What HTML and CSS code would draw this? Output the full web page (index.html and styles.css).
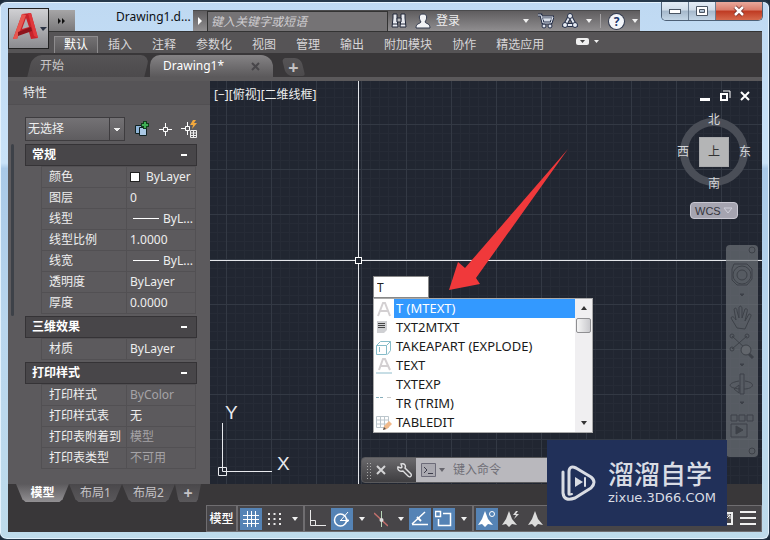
FILE: index.html
```html
<!DOCTYPE html>
<html lang="zh-CN">
<head>
    <meta charset="UTF-8">
    <meta name="viewport" content="width=device-width, initial-scale=1.0">
    <title>Drawing1.dwg</title>
    <link rel="stylesheet" href="styles.css">
</head>
<body>

<div class="window">

    <div class="window-buttons">
        <button class="win-btn" aria-label="最小化"><svg width="14" height="12"><rect x="1.500" y="4.500" width="11" height="4" fill="#fff" stroke="#4a5563"/></svg></button>
        <button class="win-btn" aria-label="最大化"><svg width="12" height="12"><path d="M.5 1.500h11v9H.5z M3.500 4.500h5v3h-5z" fill="#fff" fill-rule="evenodd" stroke="#4a5563"/></svg></button>
        <button class="win-btn win-close" aria-label="关闭"><svg width="14" height="12"><path d="M3 2l8 8M11 2l-8 8" stroke="#6d2a24" stroke-width="4"/><path d="M3 2l8 8M11 2l-8 8" stroke="#fff" stroke-width="2.500"/></svg></button>
    </div>

    <header class="header">
        <button class="app-logo" aria-label="应用程序菜单">
            <svg width="38" height="38" viewBox="0 0 38 38">
                <path d="M4 29L13 4l9-1 7 25-7 1-2-7-10 1-2 6z" fill="#c8232b"/>
                <path d="M13 4l4 1-9 24-4 0z" fill="#e8564f"/>
                <path d="M17 8l-4 11 7-2z" fill="#aeb0b4"/>
                <path d="M9 22l13-5 1 4-14 5z" fill="#8e141c"/>
                <path d="M19 3l3 0 7 25-4-2z" fill="#e0393d"/>
                <path d="M31 17h7l-4 4z" fill="#2c3445"/>
            </svg>
        </button>
        <div class="header-main">
            <div class="title-row">
                <button class="quick-more" aria-label="更多"><svg width="8" height="6"><path d="M0 0l3 3-3 3zM4 0l3 3-3 3z" fill="#111"/></svg></button>
                <span class="doc-title">Drawing1.d...</span>
                <div class="info-center">
                    <button class="info-arrow" aria-label="展开"><svg width="6" height="10"><path d="M1 1l4 4-4 4z" fill="#fff"/></svg></button>
                    <input class="info-search" type="text" placeholder="键入关键字或短语" aria-label="搜索">
                    <button class="icon-btn" aria-label="查找"><svg width="16" height="16"><path d="M2 1h4v4l1 9H1L2 5zM10 1h4v4l1 9H9l1-9z" fill="#e8eaf0" stroke="#22283a"/><path d="M6 5h4v4H6zM1 11h6M9 11h6" fill="#bbb" stroke="#22283a"/></svg></button>
                    <button class="login"><svg width="16" height="16"><path d="M8 1c5 0 4 5 2 8 1 2 5 1 5 6H1c0-5 4-4 5-6C4 6 3 1 8 1z" fill="#f2f3f6" stroke="#30384c"/></svg>登录</button>
                    <span class="spacer"></span>
                    <i class="caret"></i>
                    <button class="icon-btn" aria-label="购物车"><svg width="17" height="16"><path d="M1 2h3l2 8h8l2-6H5" fill="#d5dbe6" stroke="#26304a" stroke-width="3"/><path d="M1 2h3l2 8h8l2-6H5M6 6h9" fill="none" stroke="#e6ebf3"/><circle cx="7" cy="13" r="2" fill="#dfe4ee" stroke="#26304a"/><circle cx="13" cy="13" r="2" fill="#dfe4ee" stroke="#26304a"/></svg></button>
                    <button class="icon-btn" aria-label="A360"><svg width="16" height="16"><path d="M8 3l5 9H3z" fill="none" stroke="#26304a" stroke-width="4"/><path d="M8 3l5 9H3z" fill="none" stroke="#e6ebf3" stroke-width="2"/><circle cx="8" cy="3" r="2.500" fill="#e6ebf3" stroke="#26304a"/><circle cx="3" cy="12" r="2.500" fill="#e6ebf3" stroke="#26304a"/><circle cx="13" cy="12" r="2.500" fill="#e6ebf3" stroke="#26304a"/></svg></button>
                    <i class="caret"></i>
                    <i class="info-sep"></i>
                    <button class="help" aria-label="帮助">?</button>
                    <i class="caret"></i>
                </div>
            </div>
            <nav class="ribbon">
                <a class="ribbon-tab active" href="#">默认</a>
                <a class="ribbon-tab" href="#">插入</a>
                <a class="ribbon-tab" href="#">注释</a>
                <a class="ribbon-tab" href="#">参数化</a>
                <a class="ribbon-tab" href="#">视图</a>
                <a class="ribbon-tab" href="#">管理</a>
                <a class="ribbon-tab" href="#">输出</a>
                <a class="ribbon-tab" href="#">附加模块</a>
                <a class="ribbon-tab" href="#">协作</a>
                <a class="ribbon-tab" href="#">精选应用</a>
                <button class="ribbon-toggle" aria-label="最小化功能区"><svg width="24" height="8"><rect width="13" height="7" rx="2" fill="#f0f0f0"/><path d="M4 2h5L6.500 5z" fill="#444"/><path d="M18 2h5l-2.500 3z" fill="#f0f0f0"/></svg></button>
            </nav>
        </div>
    </header>

    <div class="file-tabs">
        <a class="file-tab" href="#"><span>开始</span></a>
        <a class="file-tab active" href="#"><span>Drawing1*</span><svg width="9" height="9"><path d="M1 1l7 7M8 1l-7 7" stroke="#48464a" stroke-width="2"/></svg></a>
        <button class="new-tab" aria-label="新图形"><span>+</span></button>
    </div>

    <main class="main">
        <aside class="panel">
            <div class="panel-title">特性</div>
            <div class="panel-body">
                <div class="panel-scroll"></div>
                <div class="panel-content">
                    <div class="select-row">
                        <select class="object-select" aria-label="选择对象">
                            <option>无选择</option>
                        </select>
                        <button class="icon-btn" aria-label="切换 PICKADD"><svg width="16" height="16"><path d="M1.500 4.500h8v8h-8z" fill="#8fb4d8" stroke="#122"/><path d="M5.500 6.500h7v8h-7z" fill="#a9c7e4" stroke="#122"/><path d="M11 0v8M7 4h8" stroke="#123d1c" stroke-width="4"/><path d="M11 1v6M8 4h6" stroke="#3fae55" stroke-width="2"/></svg></button>
                        <button class="icon-btn" aria-label="选择对象"><svg width="13" height="13"><path d="M6.500 0v4M6.500 9v4M0 6.500h4M9 6.500h4M4.500 4.500h4v4h-4z" fill="none" stroke="#fff"/></svg></button>
                        <button class="icon-btn" aria-label="快速选择"><svg width="16" height="18"><path d="M6.500 2v4M6.500 11v4M0 8.500h4M4.500 6.500h4v4h-4z" fill="none" stroke="#fff"/><path d="M12 0l-3 5h3l-1 4 5-6h-3l2-3z" fill="#f3a83c"/><path d="M9.500 10.500h6v7h-6zM9 13h7M9 15.500h7M12.500 10v8" fill="none" stroke="#eee"/></svg></button>
                    </div>

                    <section class="group">
                        <button class="group-head">常规<i></i></button>
                        <table class="props">
                            <tr><th>颜色</th><td><i class="swatch"></i>ByLayer</td></tr>
                            <tr><th>图层</th><td>0</td></tr>
                            <tr><th>线型</th><td><i class="line-sample"></i>ByL...</td></tr>
                            <tr><th>线型比例</th><td>1.0000</td></tr>
                            <tr><th>线宽</th><td><i class="line-sample"></i>ByL...</td></tr>
                            <tr><th>透明度</th><td>ByLayer</td></tr>
                            <tr><th>厚度</th><td>0.0000</td></tr>
                        </table>
                    </section>
                    <section class="group">
                        <button class="group-head">三维效果<i></i></button>
                        <table class="props">
                            <tr><th>材质</th><td>ByLayer</td></tr>
                        </table>
                    </section>
                    <section class="group">
                        <button class="group-head">打印样式<i></i></button>
                        <table class="props">
                            <tr><th>打印样式</th><td class="muted">ByColor</td></tr>
                            <tr><th>打印样式表</th><td>无</td></tr>
                            <tr><th>打印表附着到</th><td class="muted">模型</td></tr>
                            <tr><th>打印表类型</th><td class="muted">不可用</td></tr>
                        </table>
                    </section>
                </div>
            </div>
        </aside>

        <div class="canvas">
            <div class="view-label">[−][俯视][二维线框]</div>

            <div class="view-buttons">
                <button aria-label="最小化"><svg width="11" height="11"><path d="M0 8h10v3H0z" fill="#fff"/></svg></button>
                <button aria-label="还原"><svg width="11" height="11"><path d="M1 4h6v6H1z" fill="none" stroke="#fff" stroke-width="2"/><path d="M3 1h7v7" fill="none" stroke="#fff"/></svg></button>
                <button aria-label="关闭"><svg width="10" height="11"><path d="M1 2l8 8M9 2l-8 8" stroke="#fff" stroke-width="2"/></svg></button>
            </div>

            <!-- 十字光标 -->
            <div class="cross-v"></div>
            <div class="cross-h"></div>
            <div class="pickbox"></div>

            <!-- UCS 图标 -->
            <svg class="ucs" width="84" height="86">
                <path d="M10.500 30v48.500H60M6.500 74.500h8v8h-8z" fill="none" stroke="#e8eaee"/>
                <text x="13" y="26">Y</text>
                <text x="65" y="77">X</text>
            </svg>

            <!-- ViewCube -->
            <div class="viewcube">
                <span class="north">北</span>
                <span class="west">西</span>
                <span class="cube">上</span>
                <span class="east">东</span>
                <span class="south">南</span>
            </div>
            <button class="wcs">WCS<svg width="10" height="7"><path d="M1 1h8L5 6z" fill="none" stroke="#cfcfda"/></svg></button>

            <!-- 导航栏 -->
            <div class="navbar">
                <svg width="32" height="212" fill="none" stroke="#3d4148">
                    <circle cx="26" cy="5" r="3"/>
                    <path d="M8 19h13l5 5v10l-5 6H11l-5-5V24z"/><circle cx="16" cy="30" r="9"/><circle cx="16" cy="30" r="5"/>
                    <path d="M14 49h4l-2 2zM14 119h4l-2 2zM14 157h4l-2 2z" fill="#3d4148"/>
                    <path d="M11 83L5 73c1-3 4 0 5 2l-2-11c2-2 3 0 3 2l2 7 0-11c2-2 3 0 3 2v9l3-9c2-1 3 1 2 3l-2 9 4-7c3 0 2 2 1 4l-5 11z"/>
                    <path d="M6 91l14 13M21 91L6 104"/><circle cx="6" cy="91" r="2"/><circle cx="21" cy="91" r="2"/><circle cx="6" cy="104" r="2"/><circle cx="20" cy="105" r="5" fill="#62666c"/><path d="M23 109l4 4" stroke-width="3"/>
                    <path d="M14 129h4v20h-4zM13 136c-12 2-12 7 1 8M19 136c12 2 8 8-1 8M8 144l5-4v8z"/>
                    <path d="M5 170h6v6H5zM13 170h6v6h-6zM21 170h6v6h-6zM5 179h16v13H5z"/><path d="M10 181l7 4-7 4z" fill="#3d4148"/>
                    <circle cx="26" cy="206" r="3"/>
                </svg>
            </div>

            <svg class="arrow" width="124" height="146">
                <path d="M122 1L30 130l4 6-31 6L12 114l7 6z" fill="#f0393b"/>
            </svg>

            <input class="dyn-input" type="text" value="T" aria-label="命令">
            <div class="suggest">
                <ul class="suggest-list">
                    <li class="selected"><svg width="16" height="16"><path d="M2 15L7 2h2l5 13M4 10h8" fill="none" stroke="#d3d0d2" stroke-width="2"/></svg><span>T (MTEXT)</span></li>
                    <li><svg width="16" height="16"><path d="M1 1h10v9l-3 3H1z" fill="#cfd0d3"/><path d="M2 3.500h7M2 5.500h7M2 7.500h7" stroke="#444"/></svg><span>TXT2MTXT</span></li>
                    <li><svg width="16" height="16"><path d="M.5 6.500h10v9H.5zM.5 6.500l4-4h10l-4 4M14.500 2.500v9l-3 4M3.500 8v5" fill="none" stroke="#86bcc9"/></svg><span>TAKEAPART (EXPLODE)</span></li>
                    <li><svg width="16" height="16"><path d="M3 12L7 1h2l5 11M4 8h8" fill="none" stroke="#d3d0d2" stroke-width="2"/><path d="M0 15h16" stroke="#8fbccb"/></svg><span>TEXT</span></li>
                    <li><svg width="16" height="16"></svg><span>TXTEXP</span></li>
                    <li><svg width="16" height="16"><path d="M0 1.500h8" stroke="#86aebb" stroke-dasharray="3 1"/><path d="M11 1.500h4" stroke="#ccc"/></svg><span>TR (TRIM)</span></li>
                    <li><svg width="16" height="16"><path d="M.5 1.500h12v11H.5zM0 5h12M0 9h12M4.500 1v11M8.500 1v11" fill="none" stroke="#bcc6cc"/><path d="M7 15l1-4 5-5 3 3-5 5z" fill="#f0b98a"/><path d="M7 15l1-3 2 2z" fill="#555"/></svg><span>TABLEDIT</span></li>
                </ul>
                <div class="suggest-scroll">
                    <i class="up"></i>
                    <i class="thumb"></i>
                    <i class="down"></i>
                </div>
            </div>

            <div class="cmdline">
                <i class="grip"></i>
                <button aria-label="关闭"><svg width="10" height="10"><path d="M1 1l8 8M9 1L1 9" stroke="#d4d4d6" stroke-width="2"/></svg></button>
                <button aria-label="自定义"><svg width="15" height="15"><path d="M1 4l3 1 1-1-1-3c4-1 5 2 4 4l6 6c1 2-1 4-3 2L6 8C3 9 0 7 1 4z" fill="none" stroke="#e0e0e2" stroke-width="1.400"/></svg></button>
                <label class="cmd-field">
                    <svg width="24" height="14"><path d="M.5.5h14v13H.5z" fill="#aaa9b0" stroke="#6c6b78"/><path d="M3 4l3 3-3 3M7 10.500h5" fill="none" stroke="#3c3c4a"/><path d="M18 5h6l-3 4z" fill="#66656c"/></svg>
                    <input type="text" placeholder="键入命令">
                </label>
            </div>
        </div>
    </main>

    <div class="layout-tabs">
        <a class="layout-tab active" href="#"><span>模型</span></a>
        <a class="layout-tab" href="#"><span>布局1</span></a>
        <a class="layout-tab" href="#"><span>布局2</span></a>
        <button class="layout-tab add" aria-label="新建布局"><span>+</span></button>
    </div>

    <footer class="statusbar">
        <div class="status-group">
            <button class="status-btn text">模型</button>
        </div>
        <div class="status-group">
            <button class="status-btn on" aria-label="栅格"><svg width="16" height="16"><path d="M4.500 0v16M8.500 0v16M12.500 0v16M0 4.500h16M0 8.500h16M0 12.500h16" stroke="#fff"/></svg></button>
            <button class="status-btn" aria-label="捕捉"><svg width="14" height="14"><path d="M0 2h14M0 7h14M0 12h14" stroke="#e8e8e8" stroke-width="2" stroke-dasharray="2 3.500"/></svg></button>
            <button class="status-caret" aria-label="捕捉设置"><i class="caret"></i></button>
        </div>
        <div class="status-group">
            <button class="status-btn" aria-label="正交"><svg width="18" height="17"><path d="M1.500 0v15.500H17M1.500 10.500h5v5" fill="none" stroke="#e8e8e8"/></svg></button>
            <button class="status-btn on" aria-label="极轴追踪"><svg width="18" height="16"><circle cx="7.500" cy="9" r="6" fill="none" stroke="#fff" stroke-width="1.500"/><path d="M7 9.500h9M8 9l7-8M13 7l3 2.500-3 2" fill="none" stroke="#fff"/></svg></button>
            <button class="status-caret" aria-label="极轴设置"><i class="caret"></i></button>
            <button class="status-btn" aria-label="等轴测草图"><svg width="14" height="16"><path d="M0 2l14 13" stroke="#c2706c" stroke-width="1.500"/><path d="M7.500 0v16" stroke="#b9d6b9"/><circle cx="7.500" cy="9" r="2" fill="#ddd"/></svg></button>
            <button class="status-caret" aria-label="等轴测设置"><i class="caret"></i></button>
            <button class="status-btn on" aria-label="对象捕捉追踪"><svg width="18" height="16"><path d="M1 13.500h16M1 13L14 1" fill="none" stroke="#fff" stroke-width="1.500"/><path d="M6 6l4 4" stroke="#fff" stroke-width="2"/></svg></button>
            <button class="status-btn on" aria-label="对象捕捉"><svg width="18" height="17"><path d="M8 3.500h7.500v12h-12V9M.5 1.500h5v5h-5z" fill="none" stroke="#fff" stroke-width="1.500"/></svg></button>
            <button class="status-caret" aria-label="捕捉模式"><i class="caret"></i></button>
        </div>
        <div class="status-group wide">
            <button class="status-btn on" aria-label="注释可见性"><svg width="18" height="16"><path d="M7 0l3 8 5 6-5-1-3 3-3-3-4 1 4-6z" fill="#fff"/><circle cx="14" cy="3" r="2.500" fill="none" stroke="#fff"/></svg></button>
            <button class="status-btn" aria-label="自动缩放"><svg width="18" height="16"><path d="M7 0l3 8 5 6-5-1-3 3-3-3-4 1 4-6z" fill="#ddd"/><path d="M14 0l-3 4h3l-2 4 5-5h-3l2-3z" fill="#ddd"/></svg></button>
            <button class="status-btn" aria-label="注释比例"><svg width="15" height="16"><path d="M7 0l3 8 5 6-5-1-3 3-3-3-4 1 4-6z" fill="#ddd"/></svg></button>
            <span class="spacer"></span>
            <button class="status-btn small" aria-label="全屏显示"><svg width="13" height="13"><path d="M1 1h11v11H1z" fill="none" stroke="#eee" stroke-width="2"/><path d="M5 8l5-5M6 3h4v4" fill="none" stroke="#eee"/></svg></button>
            <button class="status-btn" aria-label="自定义"><svg width="16" height="15"><path d="M0 1h16M0 7h16M0 13h16" stroke="#f0f0f0" stroke-width="2"/></svg></button>
        </div>
    </footer>

    <div class="watermark">
        <svg width="36" height="38" viewBox="0 0 36 38" fill="none" stroke="#d9dce4" stroke-width="3" stroke-linejoin="round" stroke-linecap="round">
            <path d="M8 30V8q0-7 7-4l15 9q6 5 0 11L14 34q-11 4-12-5V8"/>
            <path d="M14 13l8 5-8 5z" fill="#d9dce4" stroke="none"/>
            <path d="M8 30q0 1 3 0" stroke-width="2"/>
            <path d="M24 14v8" stroke-width="2"/>
        </svg>
        <div class="watermark-text">
            <strong>溜溜自学</strong>
            <span>zixue.3D66.COM</span>
        </div>
    </div>
</div>

</body>
</html>
```
FILE: styles.css
```css
* {
    box-sizing: border-box;
}

body {
    margin: 0;
    background-color: #1d2c3c;
    font-family: "Noto Sans", "Noto Sans CJK SC", sans-serif;
    font-size: 12px;
    line-height: 16px;
    color: #eee;
}

button,
input,
select {
    margin: 0;
    padding: 0;
    border: none;
    background: none;
    font: inherit;
    color: inherit;
}

a {
    color: inherit;
    text-decoration: none;
}

svg {
    display: block;
    flex: none;
}

.spacer {
    flex: 1;
}

.caret {
    border: 3px solid transparent;
    border-top: 4px solid #f0f0f0;
    border-bottom: none;
}

.icon-btn {
    flex: none;
}

/* 窗口 */
.window {
    position: relative;
    display: flex;
    flex-direction: column;
    min-height: 100vh;
    padding: 8px 7px 7px 8px;
    border: 1px solid #26384a;
    border-top-width: 2px;
    border-radius: 7px;
    border-left-width: 0;
    background: linear-gradient(#bfd9f2, #c9e2f8 30%, #a9c9e8 31%, #b9d6ee 60%, #bedbeb);
    box-shadow: inset 0 0 0 1px #e4f2fd;
}

.window-buttons {
    position: absolute;
    top: 0;
    right: 6px;
    display: flex;
    border: 1px solid #4d6076;
    border-top: none;
    border-radius: 0 0 5px 5px;
    overflow: hidden;
}

.win-btn {
    display: flex;
    align-items: center;
    justify-content: center;
    width: 27px;
    height: 18px;
    border-right: 1px solid #6a7c90;
    background: linear-gradient(#e4edf6, #cfdce8 45%, #a5b8cb 50%, #c4d6e6);
}

.win-close {
    width: 46px;
    border-right: none;
    background: linear-gradient(#e9a99c, #d97c6a 45%, #bf3a22 50%, #d5694c);
}

/* 标题栏与功能区 */
.header {
    display: flex;
    background: linear-gradient(#0000 21px, #333 21px, #333 22px, #565456 22px);
}

.app-logo {
    width: 41px;
    height: 41px;
    margin-top: -2px;
    border: 1px solid #222;
    background: linear-gradient(#d0d0d3, #8b8b8f);
}

.header-main {
    flex: 1;
    min-width: 0;
}

.title-row {
    display: flex;
    height: 21px;
    margin-right: 122px;
}

.quick-more {
    display: flex;
    align-items: center;
    justify-content: center;
    width: 26px;
    background: linear-gradient(#a6a5a6, #7a797b);
}

.doc-title {
    flex: none;
    width: 118px;
    padding-left: 41px;
    line-height: 13px;
    color: #0c0f14;
}

.info-center {
    flex: 1;
    display: flex;
    align-items: center;
    gap: 8px;
    min-width: 0;
    padding-right: 2px;
    border-top: 1px solid #4a4a4c;
    background: linear-gradient(#5f5d5f, #908e90);
}

.info-arrow {
    padding-left: 4px;
}

.info-search {
    flex: none;
    width: 181px;
    height: 21px;
    margin-left: -4px;
    margin-right: -5px;
    padding-left: 3px;
    border: 1px solid #333;
    background-color: #757375;
    font-style: italic;
}

.info-search::placeholder {
    color: #cfcdd0;
    opacity: 1;
}

.login {
    display: flex;
    align-items: center;
    gap: 5px;
}

.info-sep {
    width: 1px;
    height: 14px;
    background-color: #a5a3a5;
}

.help {
    width: 15px;
    height: 15px;
    border-radius: 50%;
    background-color: #f4f6fa;
    box-shadow: 0 0 0 1px #333c52;
    font-weight: bold;
    line-height: 15px;
    color: #22396e;
}

.ribbon {
    display: flex;
    align-items: flex-end;
    height: 22px;
    padding-left: 5px;
}

.ribbon-tab {
    height: 17px;
    padding: 0 10px;
    line-height: 17px;
    white-space: nowrap;
    color: #d8d6d8;
}

.ribbon-tab.active {
    border: 1px solid #8d8b8d;
    border-bottom: none;
    padding: 0 9px;
    line-height: 16px;
    background: linear-gradient(#737173, #5a585a);
    color: #fff;
}

.ribbon-toggle {
    align-self: center;
    margin-left: 22px;
}

/* 图形选项卡 */
.file-tabs {
    display: flex;
    align-items: flex-end;
    height: 28px;
    padding-left: 19px;
    border-bottom: 4px solid #5b595b;
    background-color: #393739;
}

.file-tab {
    position: relative;
    z-index: 0;
    display: flex;
    align-items: center;
    justify-content: space-between;
    width: 123px;
    height: 22px;
    padding: 0 13px;
    color: #cac8ca;
}

.file-tab::before,
.new-tab::before {
    content: "";
    position: absolute;
    inset: 0 3px;
    z-index: -1;
    border-radius: 9px 9px 0 0;
    background: linear-gradient(#565456, #4c4a4c);
    transform: skewX(-14deg);
}

.file-tab.active {
    color: #fff;
}

.file-tab.active::before {
    background: linear-gradient(#858385, #5b595b);
    transform: none;
    inset: 0;
    border-radius: 10px 12px 0 0;
}

.new-tab {
    position: relative;
    z-index: 0;
    width: 25px;
    height: 18px;
    margin: 0 0 1px 8px;
    font-size: 18px;
    font-weight: bold;
    line-height: 18px;
    color: #c4c2c4;
}

.new-tab::before {
    border-radius: 4px 6px 3px 6px;
    transform: skewX(14deg);
}

/* 主区域 */
.main {
    flex: 1;
    display: flex;
    min-height: 403px;
}

.panel {
    display: flex;
    flex-direction: column;
    width: 202px;
    background-color: #5c5a5d;
}

.panel-title {
    height: 24px;
    padding-left: 15px;
    border-bottom: 1px solid #514f52;
    line-height: 24px;
    background-color: #565457;
}

.panel-body {
    flex: 1;
    display: flex;
    padding: 12px 13px 0 3px;
}

.panel-scroll {
    width: 5px;
    height: 172px;
    margin: 27px 9px 0 0;
    border-radius: 3px;
    background-color: #3d4148;
}

.panel-content {
    flex: 1;
}

.select-row {
    display: flex;
    align-items: center;
    gap: 9px;
    height: 24px;
    margin-bottom: 3px;
}

.object-select {
    width: 100px;
    height: 24px;
    padding-left: 2px;
    border: 1px solid #3e3c3f;
    appearance: none;
    background:
        linear-gradient(#3e3c3f, #3e3c3f) right 14px top / 1px 100% no-repeat,
        conic-gradient(from -45deg at 50% 100%, #eee 90deg, #0000 0) right 4px center / 6px 3px no-repeat,
        linear-gradient(#747275, #5e5c5f);
}

.panel-content {
    padding-left: 2px;
}

.group {
    margin-bottom: 2px;
}

.group-head {
    display: flex;
    align-items: center;
    justify-content: space-between;
    width: 100%;
    height: 22px;
    padding: 0 9px 0 6px;
    border: 1px solid #353336;
    background-color: #484649;
    font-weight: bold;
    color: #fff;
}

.group-head i {
    width: 6px;
    height: 2px;
    background-color: #fff;
}

.props {
    width: 155px;
    margin-left: 16px;
    border-collapse: collapse;
    table-layout: fixed;
}

.props th,
.props td {
    height: 21px;
    padding: 0 0 0 3px;
    border: 1px solid #525053;
    line-height: 20px;
    white-space: nowrap;
}

.props th {
    width: 85px;
    padding-left: 7px;
    font-weight: normal;
    text-align: left;
}

.props .muted {
    color: #a5a3a6;
}

.swatch {
    display: inline-block;
    width: 10px;
    height: 10px;
    margin-right: 6px;
    border: 1px solid #222;
    background-color: #fff;
    vertical-align: -1px;
}

.line-sample {
    display: inline-block;
    width: 26px;
    height: 1px;
    margin: 0 4px 0 3px;
    background-color: #fff;
    vertical-align: 4px;
}

/* 绘图区 */
.canvas {
    position: relative;
    flex: 1;
    min-width: 0;
    overflow: hidden;
    background-color: #212631;
    background-image:
        linear-gradient(90deg, #333944 1px, #0000 1px),
        linear-gradient(#333944 1px, #0000 1px),
        linear-gradient(90deg, #262b36 1px, #0000 1px),
        linear-gradient(#262b36 1px, #0000 1px);
    background-position: 16px 43px;
    background-size: 45px 45px, 45px 45px, 9px 9px, 9px 9px;
}

.view-label {
    padding: 6px 4px;
}

.view-buttons {
    position: absolute;
    top: 9px;
    right: 12px;
    display: flex;
    gap: 9px;
}

.cross-v,
.cross-h,
.pickbox {
    position: absolute;
    background-color: #e4e6ea;
}

.cross-v {
    left: 148px;
    top: 0;
    bottom: 0;
    width: 1px;
}

.cross-h {
    top: 179px;
    left: 0;
    right: 0;
    height: 1px;
}

.pickbox {
    left: 145px;
    top: 176px;
    width: 7px;
    height: 7px;
    border: 1px solid #fff;
    background-color: #212631;
}

.ucs {
    position: absolute;
    left: 2px;
    bottom: 5px;
}

.ucs text {
    fill: #e8eaee;
    font-family: "Liberation Sans", sans-serif;
    font-size: 19px;
}

.viewcube {
    position: absolute;
    top: 37px;
    right: 14px;
    display: grid;
    grid-template-columns: 22px 40px 22px;
    grid-template-rows: 22px 42px 22px;
    justify-content: center;
    align-content: center;
    place-items: center;
    width: 68px;
    height: 68px;
    border: 8px solid #4a4e57;
    border-radius: 50%;
    color: #d4d6da;
}

.north,
.south {
    grid-column: 2;
}

.west,
.cube {
    grid-row: 2;
}

.viewcube .east {
    grid-row: 2;
    grid-column: 3;
}

.cube {
    width: 30px;
    height: 30px;
    border: 1px solid #a9aaac;
    background-color: #b4b5b6;
    line-height: 28px;
    text-align: center;
    color: #333;
}

.wcs {
    position: absolute;
    top: 121px;
    right: 24px;
    display: flex;
    align-items: center;
    justify-content: space-between;
    width: 48px;
    height: 17px;
    padding: 0 4px;
    border: 1px solid #c9c8d2;
    border-radius: 4px;
    background-color: #a5a4b0;
    font-family: "Liberation Sans", sans-serif;
    font-size: 11px;
    color: #34343c;
}

.navbar {
    position: absolute;
    top: 164px;
    right: 4px;
    width: 32px;
    border-radius: 4px;
    background-color: rgba(110, 114, 120, 0.7);
}

.arrow {
    position: absolute;
    left: 236px;
    top: 67px;
}

.dyn-input {
    position: absolute;
    left: 163px;
    top: 195px;
    width: 56px;
    height: 22px;
    padding-left: 3px;
    border: 1px solid #888;
    background-color: #fff;
    color: #222;
}

.suggest {
    position: absolute;
    left: 163px;
    top: 217px;
    display: flex;
    width: 220px;
    border: 1px solid #aaa;
    background-color: #fff;
    font-size: 13px;
    color: #1a1a1a;
}

.suggest-list {
    flex: 1;
    margin: 0;
    padding: 0;
    list-style: none;
}

.suggest-list li {
    display: flex;
    align-items: center;
    height: 19px;
    padding-left: 2px;
    gap: 2px;
}

.suggest-list span {
    flex: 1;
    padding-left: 2px;
    line-height: 19px;
}

.suggest-list .selected span {
    background-color: #3399ff;
    color: #fff;
}

.suggest-scroll {
    display: flex;
    flex-direction: column;
    align-items: center;
    width: 17px;
    padding: 7px 1px;
    background-color: #f0eff1;
}

.suggest-scroll .up,
.suggest-scroll .down {
    border: 3px solid transparent;
    border-top: none;
    border-bottom: 4px solid #333;
}

.suggest-scroll .down {
    margin-top: auto;
    transform: rotate(180deg);
}

.thumb {
    width: 15px;
    height: 15px;
    margin-top: 8px;
    border: 1px solid #8f8f92;
    border-radius: 2px;
    background: linear-gradient(90deg, #f5f5f5, #c9c9cd);
}

.cmdline {
    position: absolute;
    left: 151px;
    bottom: 1px;
    display: flex;
    align-items: center;
    gap: 11px;
    width: 340px;
    height: 26px;
    padding-left: 4px;
    border: 1px solid #59595c;
    border-radius: 4px 0 0 4px;
    background: linear-gradient(#6a696c, #3f3e41);
}

.grip {
    width: 5px;
    height: 17px;
    margin-right: -6px;
    background: radial-gradient(circle, #aaa 1px, #0000 1px) 0 0 / 3px 3px;
}

.cmd-field {
    flex: 1;
    display: flex;
    align-items: center;
    gap: 8px;
    height: 24px;
    margin-left: -7px;
    padding-left: 5px;
    background-color: #b9b8bd;
}

.cmd-field input {
    flex: 1;
    min-width: 0;
}

.cmd-field input::placeholder {
    color: #6f6e76;
    opacity: 1;
}

/* 布局选项卡 */
.layout-tabs {
    display: flex;
    height: 21px;
    padding-left: 8px;
    background-color: #393739;
}

.layout-tab {
    position: relative;
    z-index: 0;
    width: 53px;
    height: 18px;
    line-height: 18px;
    text-align: center;
    color: #c5c3c6;
}

.layout-tab::before {
    content: "";
    position: absolute;
    inset: 0;
    z-index: -1;
    clip-path: polygon(0 0, 100% 0, 88% 85%, 82% 100%, 18% 100%, 12% 85%);
    background: linear-gradient(#4a484b, #5a585b);
}

.layout-tab.active {
    font-weight: bold;
    color: #fff;
}

.layout-tab.active::before {
    background: linear-gradient(#5c5a5d, #929093);
}

.layout-tab.add {
    width: 26px;
    font-size: 16px;
    font-weight: bold;
}

/* 状态栏 */
.statusbar {
    display: flex;
    height: 27px;
    padding-left: 198px;
    background-color: #393739;
}

.status-group {
    display: flex;
    align-items: center;
    gap: 2px;
    padding: 0 2px;
    border: 1px solid #6f6d70;
    background-color: #474548;
}

.status-group:first-child {
    padding: 0;
}

.status-group.wide {
    flex: 1;
    padding-right: 2px;
}

.status-btn {
    display: flex;
    align-items: center;
    justify-content: center;
    width: 22px;
    height: 22px;
}

.status-btn.on {
    background-color: #5583b5;
}

.status-btn.text {
    width: 29px;
    font-weight: 500;
    color: #fff;
}

.status-btn.small {
    width: 14px;
    margin-right: 2px;
}

.status-caret {
    display: flex;
    justify-content: center;
    width: 13px;
}

/* 水印 */
.watermark {
    position: absolute;
    right: 42px;
    bottom: 13px;
    display: flex;
    align-items: center;
    gap: 11px;
    width: 180px;
    height: 86px;
    padding-left: 14px;
    background-color: #213059;
    color: #d9dce4;
}

.watermark-text {
    display: flex;
    flex-direction: column;
    font-family: "Liberation Sans", "Noto Sans CJK SC", sans-serif;
}

.watermark-text strong {
    font-size: 26px;
    font-weight: 500;
    line-height: 30px;
}

.watermark-text span {
    font-family: "DejaVu Sans", sans-serif;
    font-size: 13px;
}
```
